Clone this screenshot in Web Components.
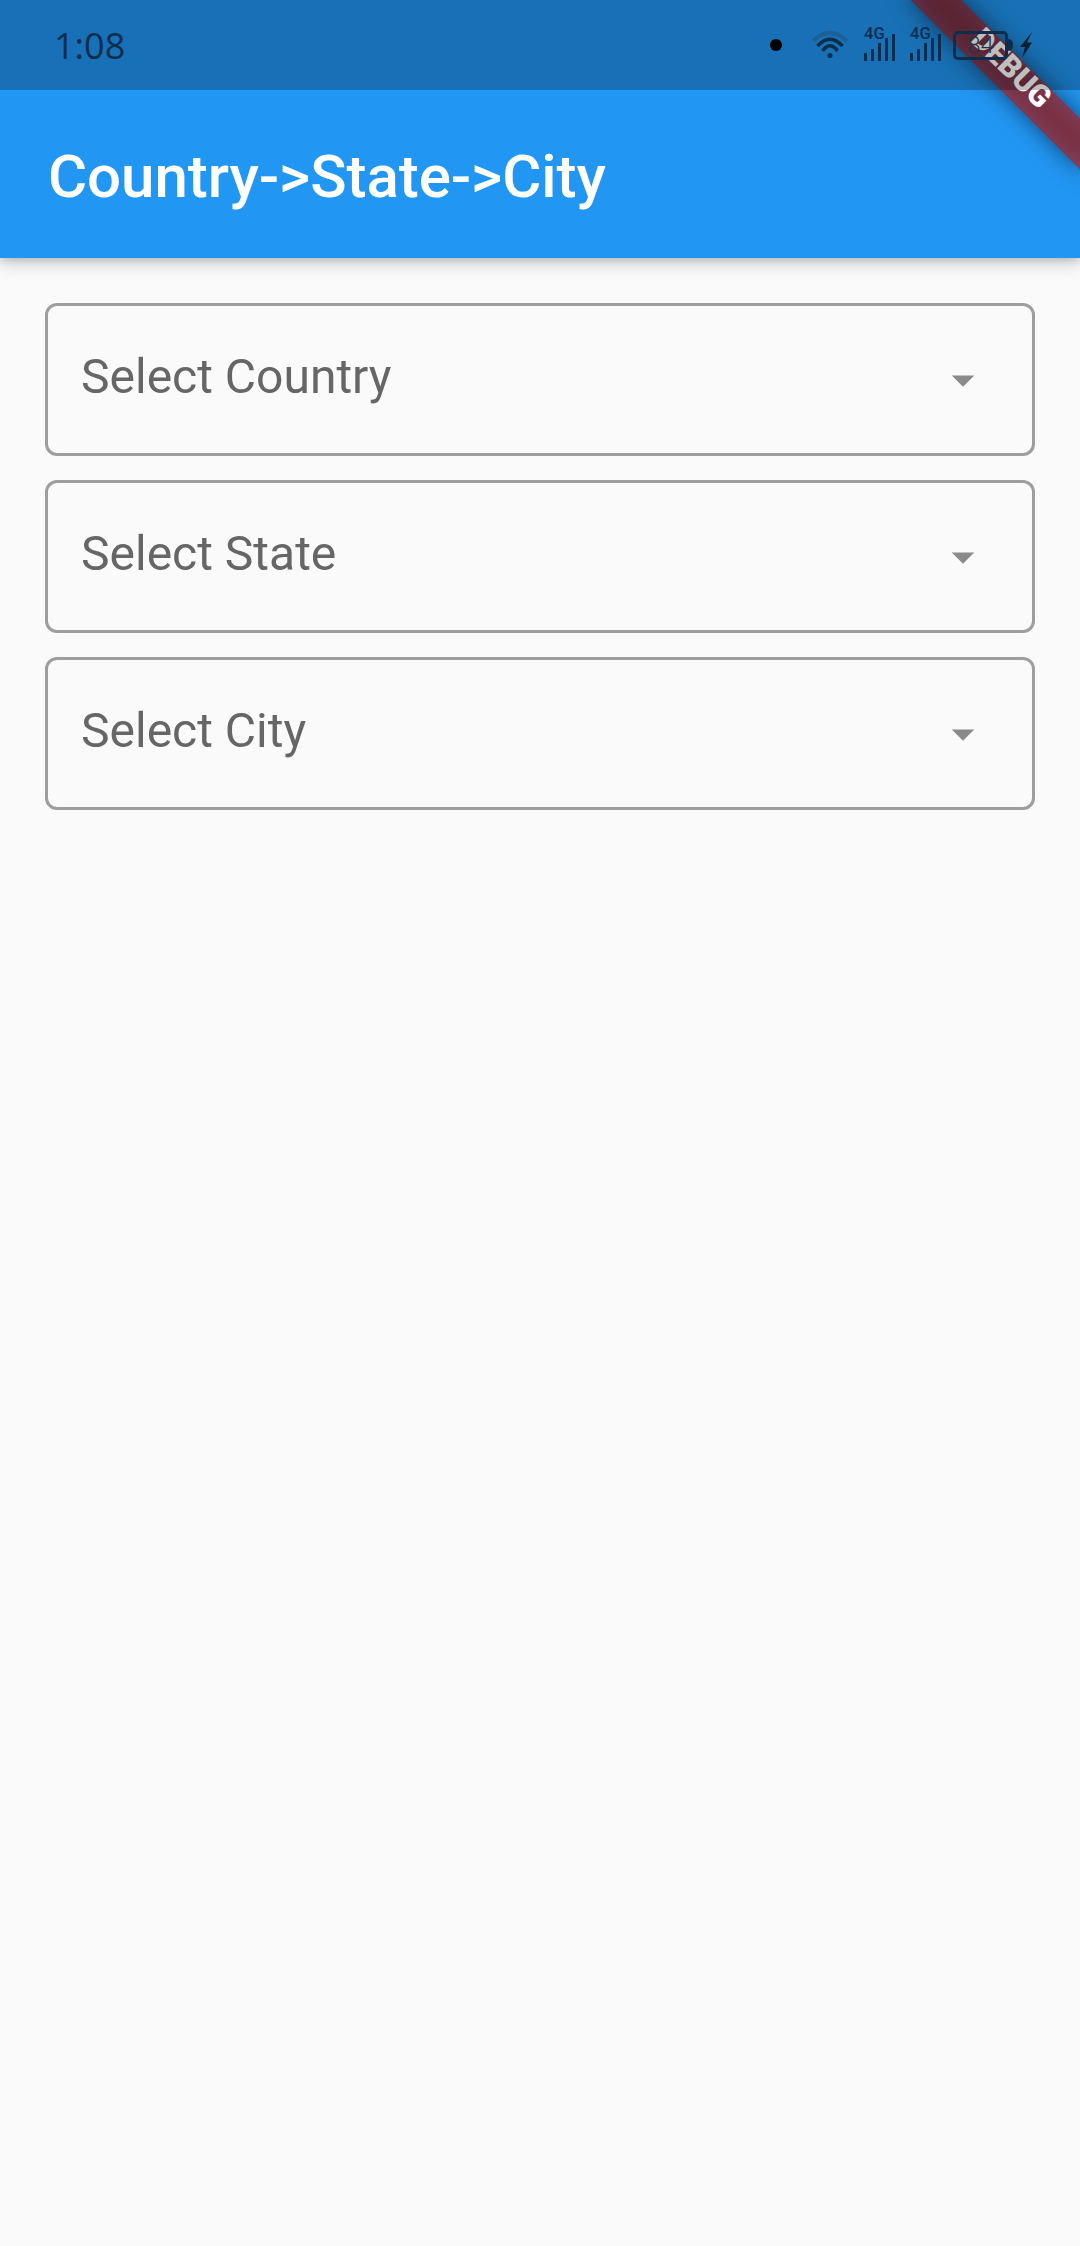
<!DOCTYPE html>
<html>
<head>
<meta charset="utf-8">
<title>Country State City</title>
<style>
  html, body { margin: 0; padding: 0; background: #fafafa; }
</style>
</head>
<body>
<demo-app></demo-app>
<script>
const BARRAS = `<svg width="31" height="27" viewBox="0 0 31 27" fill="#0b2e4d"><rect x="0" y="19" width="3" height="8"/><rect x="7" y="15" width="3" height="12"/><rect x="14" y="9" width="3" height="18"/><rect x="21" y="4" width="3" height="23"/><rect x="28" y="0" width="3" height="27"/></svg>`;

// La barra de estado va encima de todo: oscurece tambien la cinta DEBUG
customElements.define("status-bar", class extends HTMLElement {
    constructor() {
        super();
        this.attachShadow({ mode: "open" });
        this.shadowRoot.innerHTML = `
            <style>
                :host { position: absolute; left: 0; top: 0; width: 100%; display: flex; align-items: center; height: 90px; background: rgba(0,0,0,.25); color: #0b2e4d; box-sizing: border-box; padding: 0 48px 0 54px; }
                .time { font: 400 36px "Open Sans", sans-serif; flex: 1; }
                .dot { width: 12px; height: 12px; border-radius: 50%; background: #000; margin-right: 30px; }
                svg { display: block; flex: none; }
                .sig { position: relative; width: 31px; height: 34px; margin: 0 0 2px 15px; }
                .sig.first { margin-left: 16px; }
                .sig span { position: absolute; left: 0; top: -1px; font: 500 16.5px/15px Roboto, sans-serif; }
                .sig svg { position: absolute; left: 0; bottom: 0; }
                .bat { width: 55px; height: 29px; margin-left: 12px; box-sizing: border-box; border: 3px solid #0b2e4d; border-radius: 5px; text-align: center; font: 300 24px/23px Roboto, sans-serif; color: #27343f; }
                .cap { width: 5px; height: 12px; background: #0b2e4d; border-radius: 0 6px 6px 0; }
            </style>
            <div class="time">1:08</div>
            <div class="dot"></div>
            <svg width="36" height="27" viewBox="0 0 36 27" fill="none" stroke-width="3.5" style="margin-top:-1px"><path d="M1 10Q18 -6 35 10" stroke="#1f5f94" stroke-width="4"/><path d="M5.5 15Q18 1.5 30.5 15" stroke="#0b2e4d"/><path d="M10.500 20Q18 9.500 25.500 20" stroke="#0b2e4d"/><circle cx="18" cy="24.500" r="2.500" fill="#0b2e4d" stroke="none"/></svg>
            <div class="sig first"><span>4G</span>${BARRAS}</div>
            <div class="sig"><span>4G</span>${BARRAS}</div>
            <div class="bat">84</div>
            <div class="cap"></div>
            <svg width="12" height="26" viewBox="0 0 12 26" style="margin-left:7px"><path d="M12 0L0 15H5L2 26L12 10.500H7Z" fill="#0b1f30"/></svg>
        `;
    }
});

customElements.define("app-bar", class extends HTMLElement {
    constructor() {
        super();
        this.attachShadow({ mode: "open" });
        this.shadowRoot.innerHTML = `
            <style>
                :host { display: flex; align-items: center; height: 258px; box-sizing: border-box; padding: 95px 0 0 48px; background: #2196f3; color: #fff; font: 500 60px Roboto, sans-serif; letter-spacing: -.05px; box-shadow: 0 6px 15px rgba(0,0,0,.18), 0 3px 6px rgba(0,0,0,.1); position: relative; }
                .title { will-change: transform; }
            </style>
            <div class="title"><slot></slot></div>
        `;
    }
});

customElements.define("select-box", class extends HTMLElement {
    constructor() {
        super();
        this.attachShadow({ mode: "open" });
        this.shadowRoot.innerHTML = `
            <style>
                :host { display: flex; align-items: center; height: 153px; box-sizing: border-box; border: 3px solid #9e9e9e; border-radius: 12px; padding: 0 42px 0 33px; color: #666; font: 400 48px Roboto, sans-serif; }
                .label { flex: 1; margin-top: -6px; will-change: transform; }
                svg { display: block; margin-top: 1px; }
            </style>
            <div class="label"><slot></slot></div>
            <svg width="54" height="54" viewBox="0 0 24 24"><path d="M7 10l5 5 5-5z" fill="#8a8a8a"/></svg>
        `;
    }
});

customElements.define("debug-banner", class extends HTMLElement {
    constructor() {
        super();
        this.attachShadow({ mode: "open" });
        this.shadowRoot.innerHTML = `
            <style>
                :host { position: absolute; left: 888px; top: 54px; width: 240px; height: 36px; transform: rotate(45deg); color: #fff; font: 900 30.6px/36px Roboto, sans-serif; text-align: center; }
                .shadow { position: absolute; inset: 0; background: rgba(0,0,0,.5); filter: blur(12px); }
                .band { position: absolute; inset: 0; background: rgba(183,28,28,.627); }
                .text { position: relative; top: -5px; }
            </style>
            <div class="shadow"></div>
            <div class="band"></div>
            <div class="text">DEBUG</div>
        `;
    }
});

customElements.define("demo-app", class extends HTMLElement {
    constructor() {
        super();
        this.attachShadow({ mode: "open" });
        this.shadowRoot.innerHTML = `
            <style>
                :host { display: block; position: relative; width: 1080px; height: 2246px; overflow: hidden; background: #fafafa; }
                main { display: flex; flex-direction: column; gap: 24px; padding: 45px; }
            </style>
            <app-bar>Country-&gt;State-&gt;City</app-bar>
            <main>
                <select-box>Select Country</select-box>
                <select-box>Select State</select-box>
                <select-box>Select City</select-box>
            </main>
            <debug-banner></debug-banner>
            <status-bar></status-bar>
        `;
    }
});
</script>
</body>
</html>
